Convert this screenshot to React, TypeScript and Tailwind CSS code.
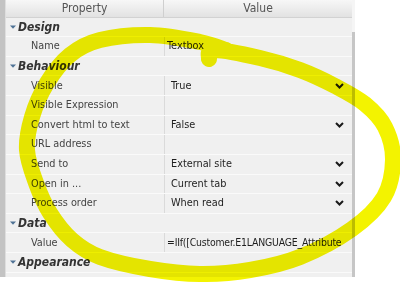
import React from 'react';

type Row =
  | { kind: 'group'; title: string }
  | { kind: 'prop'; name: string; value?: string; dropdown?: boolean; tight?: boolean };

const rows: Row[] = [
  { kind: 'group', title: 'Design' },
  { kind: 'prop', name: 'Name', value: 'Textbox' },
  { kind: 'group', title: 'Behaviour' },
  { kind: 'prop', name: 'Visible', value: 'True', dropdown: true },
  { kind: 'prop', name: 'Visible Expression' },
  { kind: 'prop', name: 'Convert html to text', value: 'False', dropdown: true },
  { kind: 'prop', name: 'URL address' },
  { kind: 'prop', name: 'Send to', value: 'External site', dropdown: true },
  { kind: 'prop', name: 'Open in ...', value: 'Current tab', dropdown: true },
  { kind: 'prop', name: 'Process order', value: 'When read', dropdown: true },
  { kind: 'group', title: 'Data' },
  { kind: 'prop', name: 'Value', value: '=IIf([Customer.E1LANGUAGE_Attribute', tight: true },
  { kind: 'group', title: 'Appearance' },
];

// centre line of the hand-drawn marker loop
const loop: [number, number][] = [
  [209, 59], [214, 50], [260, 58], [300, 70], [335, 86], [365, 104], [385, 127],
  [393, 160], [384, 197], [352, 229], [300, 257], [250, 270], [200, 274],
  [150, 269], [100, 257], [72, 240], [50, 213], [36, 183], [27, 150], [32, 117],
  [47, 83], [70, 55], [100, 40], [150, 35], [200, 42], [226, 50],
];

function smoothPath(p: [number, number][]) {
  let d = `M${p[0][0]} ${p[0][1]}`;
  for (let i = 0; i < p.length - 1; i++) {
    const p0 = p[i - 1] || p[i];
    const p1 = p[i];
    const p2 = p[i + 1];
    const p3 = p[i + 2] || p2;
    const c1x = p1[0] + (p2[0] - p0[0]) / 6;
    const c1y = p1[1] + (p2[1] - p0[1]) / 6;
    const c2x = p2[0] - (p3[0] - p1[0]) / 6;
    const c2y = p2[1] - (p3[1] - p1[1]) / 6;
    d += ` C${c1x.toFixed(1)} ${c1y.toFixed(1)} ${c2x.toFixed(1)} ${c2y.toFixed(1)} ${p2[0]} ${p2[1]}`;
  }
  return d;
}

const Caret = () => (
  <svg width="6" height="4" viewBox="0 0 6 4" className="shrink-0">
    <path d="M0 0.5 L6 0.5 L3 3.8 Z" fill="#4f7295" />
  </svg>
);

const Chevron = () => (
  <svg width="9" height="6" viewBox="0 0 9 6" className="shrink-0">
    <path d="M1 1 L4.5 4.5 L8 1" fill="none" stroke="#1a1a1a" strokeWidth="2" />
  </svg>
);

export default function App() {
  return (
    <div className="relative w-[400px] h-[282px] bg-white overflow-hidden font-['DejaVu_Sans_Condensed','Liberation_Sans',sans-serif]">
      <div className="flex h-[277px]">
        <div className="w-[6px] shrink-0 bg-[#c3c3c3] border-r border-[#dedede]" />
        <div className="w-[346px] shrink-0 flex flex-col bg-[#f0f0f0]">
          <div className="h-[17.5px] shrink-0 flex bg-gradient-to-b from-[#f7f7f7] to-[#e2e2e2] border-b border-[#d2d2d2] text-[12px] text-[#555]">
            <div className="w-[158px] shrink-0 flex items-center justify-center border-r border-[#cfcfcf]">Property</div>
            <div className="flex-1 flex items-center justify-center">Value</div>
          </div>
          {rows.map((r, i) =>
            r.kind === 'group' ? (
              <div key={i} className="h-[19.64px] shrink-0 flex items-center gap-[2px] pl-[4px] border-b border-[#fafafa]">
                <Caret />
                <span className="text-[12px] font-bold italic text-[#333]">{r.title}</span>
              </div>
            ) : (
              <div key={i} className="h-[19.64px] shrink-0 flex border-b border-[#fafafa] text-[10.8px]">
                <div className="w-[159px] shrink-0 flex items-center pl-[25px] text-[#444] border-r border-[#dadada]">{r.name}</div>
                <div className={`flex-1 min-w-0 flex items-center justify-between text-[#1e1e1e] ${r.dropdown ? 'pl-[6px] pr-[8px]' : 'pl-[2px] pr-[2px]'}`}>
                  <span className={`whitespace-nowrap ${r.tight ? 'text-[10.4px] tracking-[-0.2px]' : ''}`}>{r.value}</span>
                  {r.dropdown && <Chevron />}
                </div>
              </div>
            )
          )}
        </div>
        <div className="w-[3px] shrink-0 flex flex-col">
          <div className="h-[32px] bg-[#f5f5f5]" />
          <div className="flex-1 bg-[#c6c6c6]" />
        </div>
      </div>
      <svg className="absolute inset-0 mix-blend-multiply pointer-events-none" width="400" height="282" viewBox="0 0 400 282">
        <path d={smoothPath(loop)} fill="none" stroke="#f3f300" strokeWidth="16" strokeLinecap="round" strokeLinejoin="round" />
      </svg>
    </div>
  );
}
